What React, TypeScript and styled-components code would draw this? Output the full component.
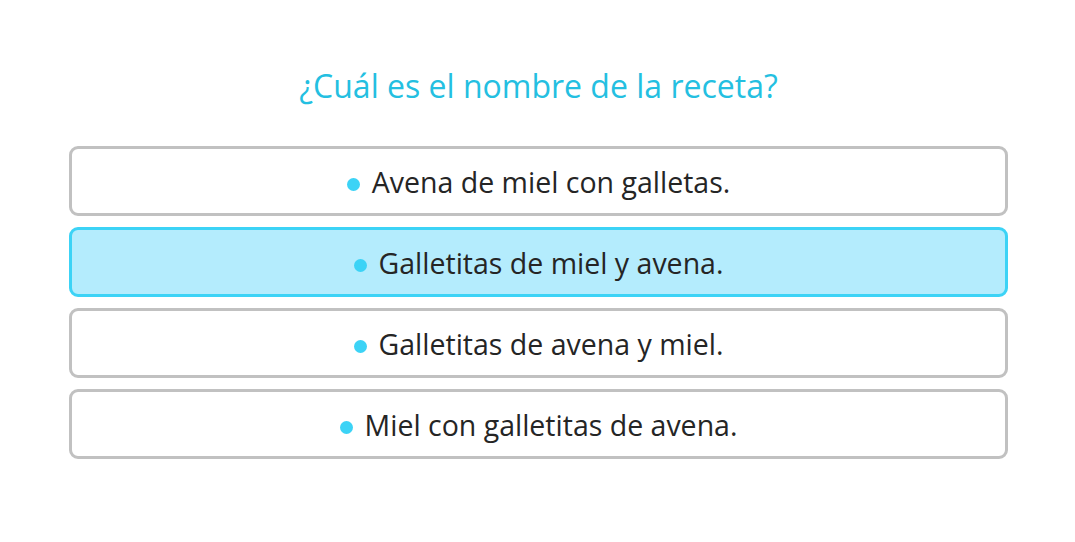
import React from "react";
import styled, { createGlobalStyle } from "styled-components";

const Global = createGlobalStyle`
  html, body { margin: 0; padding: 0; background: #ffffff; }
  body { font-family: "Open Sans", "Noto Sans", sans-serif; }
`;

const Page = styled.div`
  padding: 64px 67px 0 69px;
  display: flex;
  flex-direction: column;
  align-items: stretch;
`;

const Title = styled.h1`
  margin: 0 0 38px 0;
  text-align: center;
  font-weight: 400;
  font-size: 32px;
  line-height: 44px;
  color: #24bfe1;
`;

const List = styled.div`
  display: flex;
  flex-direction: column;
  gap: 11px;
`;

const Option = styled.div<{ $selected?: boolean }>`
  box-sizing: border-box;
  height: 70px;
  padding-top: 2px;
  border: 3px solid ${(p) => (p.$selected ? "#3cd3f6" : "#c1c1c1")};
  background: ${(p) => (p.$selected ? "#b4ecfd" : "#ffffff")};
  border-radius: 9px;
  display: flex;
  align-items: center;
  justify-content: center;
  gap: 12px;
  font-size: 28.5px;
  line-height: 40px;
  color: #252525;
`;

const Dot = styled.span`
  width: 13px;
  height: 13px;
  margin-top: 5px;
  border-radius: 50%;
  background: #3cd3f6;
  flex: none;
`;

const options = [
  "Avena de miel con galletas.",
  "Galletitas de miel y avena.",
  "Galletitas de avena y miel.",
  "Miel con galletitas de avena.",
];

export default function App() {
  return (
    <>
      <Global />
      <Page>
        <Title>¿Cuál es el nombre de la receta?</Title>
        <List>
          {options.map((o, i) => (
            <Option key={o} $selected={i === 1}>
              <Dot />
              {o}
            </Option>
          ))}
        </List>
      </Page>
    </>
  );
}
